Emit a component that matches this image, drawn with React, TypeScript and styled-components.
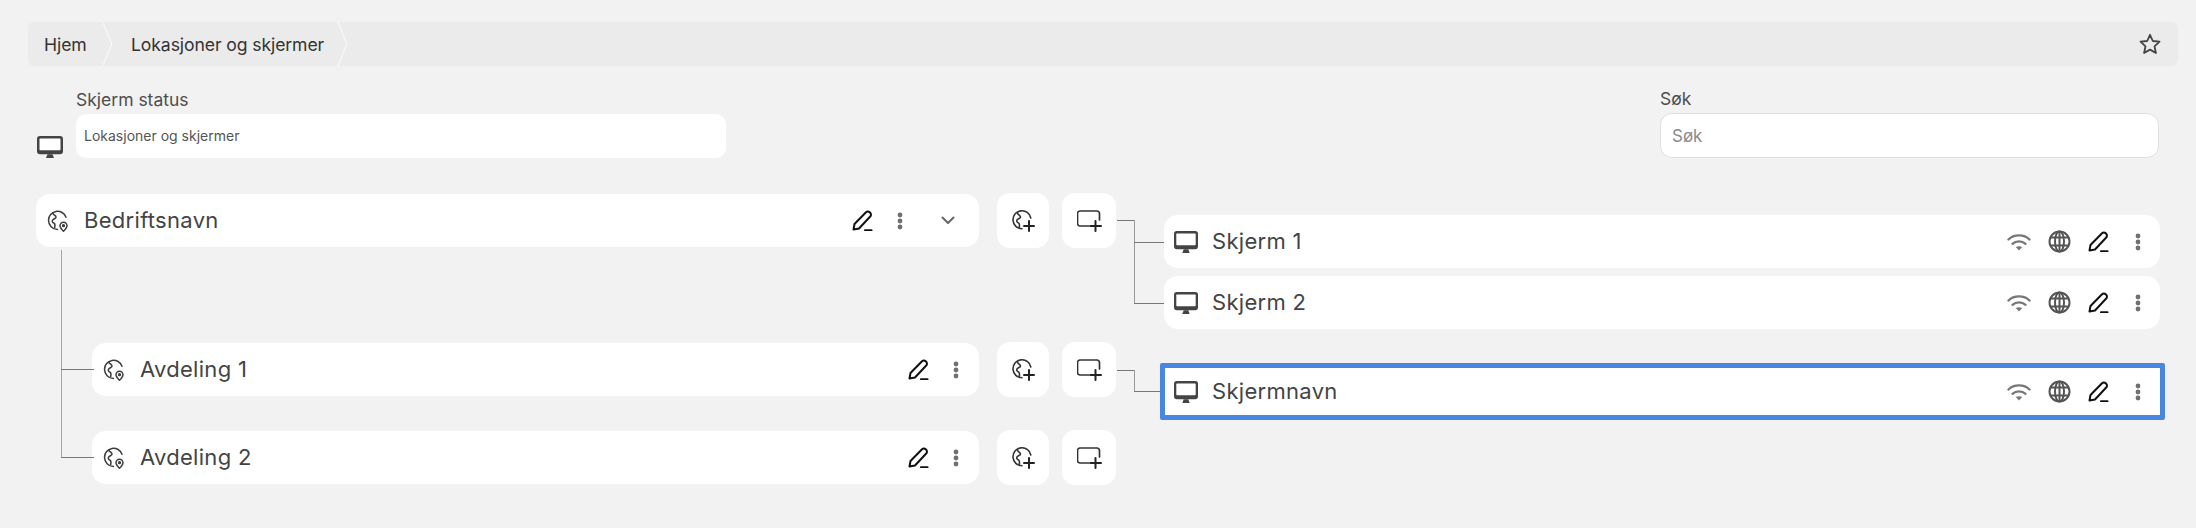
import React from "react";
import styled, { createGlobalStyle } from "styled-components";

const Global = createGlobalStyle`
  html, body { margin: 0; padding: 0; background: #f2f2f2; overflow: hidden; }
  * { box-sizing: border-box; }
  body { font-family: Inter, "Noto Sans", "Liberation Sans", sans-serif; color: #444; }
`;

const Page = styled.div`
  width: 2196px;
  height: 528px;
  padding: 22px 18px 0 28px;
`;

const Breadcrumbs = styled.nav`
  height: 44px;
  background: #ebebeb;
  border-radius: 6px;
  display: flex;
  align-items: stretch;
  padding-right: 16px;
`;

const Crumb = styled.a<{ $w: number; $pad: number }>`
  width: ${(p) => p.$w}px;
  padding-left: ${(p) => p.$pad}px;
  display: flex;
  align-items: center;
  font-size: 17.6px;
  letter-spacing: -0.1px;
  color: #333;
  white-space: nowrap;
`;

const CrumbSeparator = styled.svg`
  width: 11px;
  height: 44px;
  flex: none;
`;

const CrumbSpacer = styled.div`
  flex: 1;
`;

const StarButton = styled.div`
  display: flex;
  align-items: center;
  justify-content: center;
  color: #444;
`;

const FilterBar = styled.div`
  margin-top: 20px;
  padding: 0 19px 0 9px;
  display: flex;
  justify-content: space-between;
  align-items: flex-end;
`;

const FilterLeft = styled.div`
  display: flex;
  align-items: flex-end;
  gap: 13px;
`;

const Field = styled.label<{ $w: number }>`
  width: ${(p) => p.$w}px;
  display: flex;
  flex-direction: column;
`;

const FieldLabel = styled.span`
  font-size: 17.5px;
  line-height: 25px;
  padding-bottom: 2px;
  color: #4d4d4d;
`;

const SelectBox = styled.div`
  height: 44px;
  background: #fff;
  border-radius: 10px;
  padding: 0 8px 2px;
  display: flex;
  align-items: center;
  font-size: 14px;
  color: #555;
`;

const SearchInput = styled.input`
  height: 45px;
  background: #fff;
  border: 1px solid #e0e0e0;
  border-radius: 12px;
  padding: 0 11px;
  font: inherit;
  font-size: 17px;
  outline: none;
  &::placeholder { color: #8a8a8a; opacity: 1; }
`;

const Tree = styled.div`
  margin-top: 35px;
  position: relative;
  &::before {
    content: "";
    position: absolute;
    left: 33px;
    top: 57px;
    height: 207px;
    width: 1px;
    background: #a6a6a6;
  }
`;

const Row = styled.div<{ $gap: number }>`
  margin-top: ${(p) => p.$gap}px;
  display: grid;
  grid-template-columns: 951px 70px 67px 48px 1fr;
  align-items: start;
  padding-right: 18px;
`;

const NodeCard = styled.div<{ $indent: number; $tick?: boolean }>`
  margin-top: 1px;
  margin-left: ${(p) => p.$indent}px;
  height: 53px;
  background: #fff;
  border-radius: 14px;
  display: flex;
  align-items: center;
  padding-left: 11px;
  position: relative;
  ${(p) =>
    p.$tick
      ? `&::before {
          content: "";
          position: absolute;
          left: -31px;
          top: 26px;
          width: 33px;
          height: 1px;
          background: #777;
        }`
      : ""}
`;

const NodeName = styled.span`
  margin-left: 15px;
  padding-bottom: 2px;
  font-size: 22px;
  letter-spacing: 0.3px;
  color: #444;
  flex: 1;
`;

const NodeActions = styled.div<{ $chevron?: boolean }>`
  display: flex;
  align-items: center;
  padding-right: ${(p) => (p.$chevron ? 2 : 4)}px;
`;

const ActionSlot = styled.div<{ $w: number }>`
  width: ${(p) => p.$w}px;
  display: flex;
  align-items: center;
  justify-content: center;
`;

const SquareButton = styled.button<{ $wide?: boolean }>`
  width: ${(p) => (p.$wide ? 54 : 52)}px;
  height: 55px;
  margin-left: ${(p) => (p.$wide ? 13 : 18)}px;
  border: 0;
  padding: 0;
  background: #fff;
  border-radius: 13px;
  display: flex;
  align-items: center;
  justify-content: center;
`;

const ScreenList = styled.div<{ $top: number }>`
  margin-top: ${(p) => p.$top}px;
  display: flex;
  flex-direction: column;
  gap: 8px;
`;

const ScreenCard = styled.div<{ $selected?: boolean }>`
  height: ${(p) => (p.$selected ? 57 : 53)}px;
  background: #fff;
  border-radius: ${(p) => (p.$selected ? 2 : 14)}px;
  display: flex;
  align-items: center;
  padding: 0 3px 0 10px;
  ${(p) => (p.$selected ? "border: 5px solid #4a86e0; margin: 0 -5px 0 -4px; padding: 0 3px 0 9px;" : "")}
`;

const ScreenName = styled.span`
  margin-left: 14px;
  padding-bottom: 2px;
  font-size: 22px;
  letter-spacing: 0.3px;
  color: #444;
  flex: 1;
`;

const ScreenActions = styled.div`
  display: flex;
  align-items: center;
`;

const ConnectorSvg = styled.svg`
  display: block;
`;

const Star = () => (
  <svg width="24" height="24" viewBox="0 0 24 24" fill="none" stroke="currentColor" strokeWidth="1.8" strokeLinejoin="round">
    <path d="M12 2.8l2.8 6.2 6.700.7-5 4.600 1.400 6.700-5.900-3.400-5.900 3.400 1.400-6.700-5-4.600 6.700-.7z" />
  </svg>
);

const Monitor = ({ w = 24, h = 22 }: { w?: number; h?: number }) => (
  <svg width={w} height={h} viewBox="0 0 26 23" fill="none" preserveAspectRatio="none">
    <path d="M3 0h20a3 3 0 0 1 3 3v13a3 3 0 0 1-3 3H3a3 3 0 0 1-3-3V3a3 3 0 0 1 3-3z" fill="#444" />
    <rect x="2.500" y="2.500" width="21" height="12.500" rx="0.800" fill="#fff" />
    <path d="M10.500 19h5l1.500 4H9z" fill="#444" />
  </svg>
);

const GlobePin = () => (
  <svg width="22" height="22" viewBox="0 0 22 22" fill="none" stroke="#3d3d3d" strokeWidth="1.500" strokeLinecap="round" strokeLinejoin="round">
    <path d="M10.500 19.500C5.500 19.300 1.500 15.200 1.500 10.300a9 9 0 0 1 17.500-3" />
    <path d="M5.800 3c.6 2.300 3 2.200 3.200 4 .2 1.500-2.200 1.600-3.300 3-.9 1.200-.3 2.500 1 3 1.300.5 1.500 2.400 1 4.500" />
    <path d="M16.500 21.200c-2-2-3.500-3.700-3.500-5.500a3.500 3.500 0 0 1 7 0c0 1.800-1.500 3.500-3.500 5.500z" />
    <circle cx="16.500" cy="15.700" r="0.900" />
  </svg>
);

const GlobePlus = () => (
  <svg width="23" height="22" viewBox="0 0 23 22" fill="none" stroke="#333" strokeWidth="1.600" strokeLinecap="round" strokeLinejoin="round">
    <path d="M10 18.800A9 9 0 1 1 18.800 8" />
    <path d="M5.300 2.800c.6 2.300 3 2.200 3.200 4 .2 1.500-2.200 1.600-3.300 3-.9 1.200-.3 2.500 1 3 1.300.5 1.500 2.400 1 4.500" />
    <path d="M17 11v10M12 16h10" strokeWidth="2" stroke="#222" />
  </svg>
);

const MonitorPlus = () => (
  <svg width="25" height="22" viewBox="0 0 25 22" fill="none" stroke="#333" strokeWidth="1.700" strokeLinecap="round" strokeLinejoin="round">
    <path d="M12 16H3a2.500 2.500 0 0 1-2.500-2.500v-10A2.500 2.500 0 0 1 3 1h17a2.500 2.500 0 0 1 2.500 2.500V10" />
    <path d="M18.500 11v10M13.500 16h10.500" strokeWidth="2" stroke="#222" />
  </svg>
);

const Pencil = () => (
  <svg width="21" height="21" viewBox="0 0 21 21" fill="none" stroke="#111" strokeWidth="2" strokeLinecap="round" strokeLinejoin="round">
    <path d="M1.500 19.500l1-5.500L14 2.300a2.600 2.600 0 0 1 3.700 0l.5.500a2.600 2.600 0 0 1 0 3.700L7 18.500z" />
    <path d="M13 20.300h6.500" />
  </svg>
);

const Dots = () => (
  <svg width="6" height="18" viewBox="0 0 6 18" fill="#707070">
    <circle cx="3" cy="3" r="2.400" />
    <circle cx="3" cy="9" r="2.400" />
    <circle cx="3" cy="15" r="2.400" />
  </svg>
);

const Chevron = () => (
  <svg width="14" height="9" viewBox="0 0 14 9" fill="none" stroke="#666" strokeWidth="2" strokeLinecap="round" strokeLinejoin="round">
    <path d="M1.500 1.500L7 7l5.500-5.500" />
  </svg>
);

const Wifi = () => (
  <svg width="24" height="18" viewBox="0 0 24 18" fill="none" stroke="#777" strokeWidth="2.400" strokeLinecap="round">
    <path d="M1.500 6.500C7 1 17 1 22.500 6.500" />
    <path d="M5.500 10.800c3.500-3.200 9.500-3.200 13 0" />
    <path d="M12 17.500l-3.200-3.400c1.900-1.200 4.500-1.200 6.400 0z" fill="#777" stroke="none" />
  </svg>
);

const Globe = () => (
  <svg width="23" height="23" viewBox="0 0 23 23" fill="none" stroke="#555" strokeWidth="2">
    <circle cx="11.500" cy="11.500" r="10" />
    <ellipse cx="11.500" cy="11.500" rx="4.500" ry="10" />
    <path d="M11.500 1.500v20M2.500 7.500h18M2.500 15.500h18" />
  </svg>
);

const Separator = () => (
  <CrumbSeparator viewBox="0 0 11 44" fill="none" stroke="#f6f6f6" strokeWidth="1.500">
    <path d="M0.800 0l9 22-9 22" />
  </CrumbSeparator>
);

const Connector = ({ start, ends, height }: { start: number; ends: number[]; height: number }) => (
  <ConnectorSvg width="48" height={height} viewBox={`0 0 48 ${height}`} fill="none" shapeRendering="crispEdges">
    <path d={`M1 ${start + 0.5}h17.500`} stroke="#777" />
    <path d={`M18 ${start}V${Math.max(...ends) + 0.5}`} stroke="#999" />
    {ends.map((y) => (
      <path key={y} d={`M18 ${y + 0.5}H48`} stroke="#777" />
    ))}
  </ConnectorSvg>
);

const Node = ({ name, indent, tick, chevron }: { name: string; indent: number; tick?: boolean; chevron?: boolean }) => (
  <NodeCard $indent={indent} $tick={tick}>
    <GlobePin />
    <NodeName>{name}</NodeName>
    <NodeActions $chevron={chevron}>
      <ActionSlot $w={38}>
        <Pencil />
      </ActionSlot>
      <ActionSlot $w={38}>
        <Dots />
      </ActionSlot>
      {chevron ? (
        <ActionSlot $w={58}>
          <Chevron />
        </ActionSlot>
      ) : null}
    </NodeActions>
  </NodeCard>
);

const Screen = ({ name, selected }: { name: string; selected?: boolean }) => (
  <ScreenCard $selected={selected}>
    <Monitor />
    <ScreenName>{name}</ScreenName>
    <ScreenActions>
      <ActionSlot $w={44}>
        <Wifi />
      </ActionSlot>
      <ActionSlot $w={37}>
        <Globe />
      </ActionSlot>
      <ActionSlot $w={41}>
        <Pencil />
      </ActionSlot>
      <ActionSlot $w={38}>
        <Dots />
      </ActionSlot>
    </ScreenActions>
  </ScreenCard>
);

const AddButtons = () => (
  <>
    <SquareButton>
      <GlobePlus />
    </SquareButton>
    <SquareButton $wide>
      <MonitorPlus />
    </SquareButton>
  </>
);

export default function App() {
  return (
    <Page>
      <Global />
      <Breadcrumbs>
        <Crumb $w={74} $pad={16}>Hjem</Crumb>
        <Separator />
        <Crumb $w={224} $pad={18}>Lokasjoner og skjermer</Crumb>
        <Separator />
        <CrumbSpacer />
        <StarButton>
          <Star />
        </StarButton>
      </Breadcrumbs>

      <FilterBar>
        <FilterLeft>
          <Monitor w={26} h={22} />
          <Field $w={650}>
            <FieldLabel>Skjerm status</FieldLabel>
            <SelectBox>Lokasjoner og skjermer</SelectBox>
          </Field>
        </FilterLeft>
        <Field $w={499}>
          <FieldLabel>Søk</FieldLabel>
          <SearchInput placeholder="Søk" />
        </Field>
      </FilterBar>

      <Tree>
        <Row $gap={0}>
          <Node name="Bedriftsnavn" indent={8} chevron />
          <AddButtons />
          <Connector start={27} ends={[49, 110]} height={112} />
          <ScreenList $top={22}>
            <Screen name="Skjerm 1" />
            <Screen name="Skjerm 2" />
          </ScreenList>
        </Row>
        <Row $gap={13}>
          <Node name="Avdeling 1" indent={64} tick />
          <AddButtons />
          <Connector start={28} ends={[49]} height={52} />
          <ScreenList $top={21}>
            <Screen name="Skjermnavn" selected />
          </ScreenList>
        </Row>
        <Row $gap={10}>
          <Node name="Avdeling 2" indent={64} tick />
          <AddButtons />
        </Row>
      </Tree>
    </Page>
  );
}
